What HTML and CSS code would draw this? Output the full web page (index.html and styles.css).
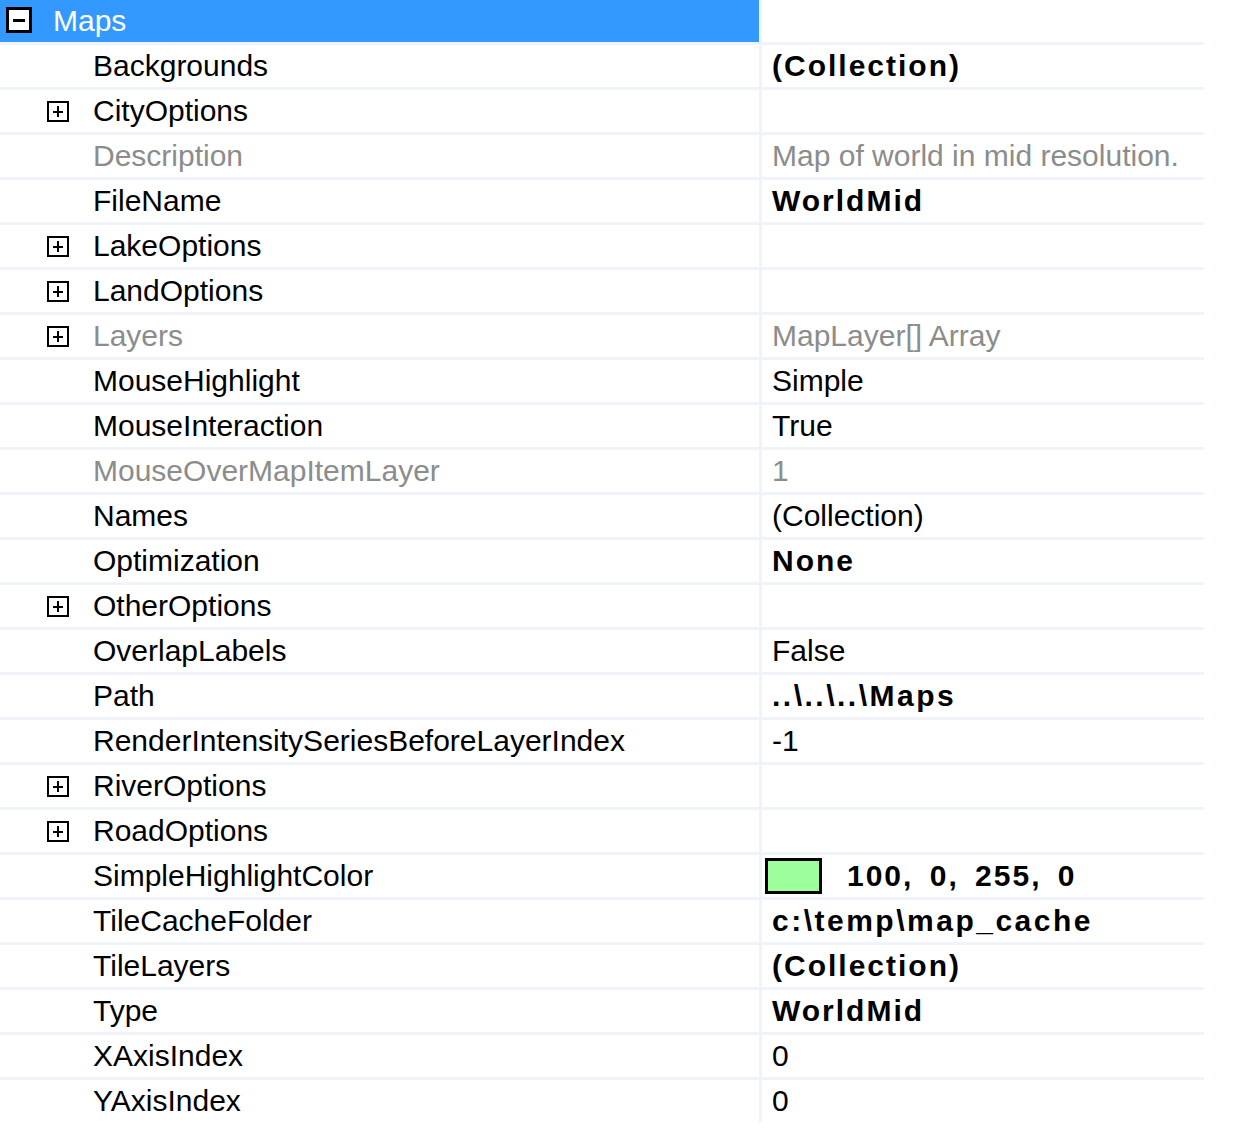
FILE: index.html
```html
<!DOCTYPE html>
<html>
<head>
<meta charset="utf-8">
<link rel="stylesheet" href="styles.css">
</head>
<body>
<div class="grid">
  <div class="row cat">
    <div class="name"><span class="box minus"></span><span class="label">Maps</span></div>
    <div class="value"></div>
  </div>
  <div class="row"><div class="name"><span class="label">Backgrounds</span></div><div class="value bold">(Collection)</div></div>
  <div class="row"><div class="name"><span class="box plus"></span><span class="label">CityOptions</span></div><div class="value"></div></div>
  <div class="row ro"><div class="name"><span class="label">Description</span></div><div class="value">Map of world in mid resolution.</div></div>
  <div class="row"><div class="name"><span class="label">FileName</span></div><div class="value bold">WorldMid</div></div>
  <div class="row"><div class="name"><span class="box plus"></span><span class="label">LakeOptions</span></div><div class="value"></div></div>
  <div class="row"><div class="name"><span class="box plus"></span><span class="label">LandOptions</span></div><div class="value"></div></div>
  <div class="row ro"><div class="name"><span class="box plus"></span><span class="label">Layers</span></div><div class="value">MapLayer[] Array</div></div>
  <div class="row"><div class="name"><span class="label">MouseHighlight</span></div><div class="value">Simple</div></div>
  <div class="row"><div class="name"><span class="label">MouseInteraction</span></div><div class="value">True</div></div>
  <div class="row ro"><div class="name"><span class="label">MouseOverMapItemLayer</span></div><div class="value">1</div></div>
  <div class="row"><div class="name"><span class="label">Names</span></div><div class="value">(Collection)</div></div>
  <div class="row"><div class="name"><span class="label">Optimization</span></div><div class="value bold">None</div></div>
  <div class="row"><div class="name"><span class="box plus"></span><span class="label">OtherOptions</span></div><div class="value"></div></div>
  <div class="row"><div class="name"><span class="label">OverlapLabels</span></div><div class="value">False</div></div>
  <div class="row"><div class="name"><span class="label">Path</span></div><div class="value bold path">..\..\..\Maps</div></div>
  <div class="row"><div class="name"><span class="label">RenderIntensitySeriesBeforeLayerIndex</span></div><div class="value">-1</div></div>
  <div class="row"><div class="name"><span class="box plus"></span><span class="label">RiverOptions</span></div><div class="value"></div></div>
  <div class="row"><div class="name"><span class="box plus"></span><span class="label">RoadOptions</span></div><div class="value"></div></div>
  <div class="row"><div class="name"><span class="label">SimpleHighlightColor</span></div><div class="value color bold"><span class="swatch"></span><span class="rgb">100, 0, 255, 0</span></div></div>
  <div class="row"><div class="name"><span class="label">TileCacheFolder</span></div><div class="value bold path">c:\temp\map_cache</div></div>
  <div class="row"><div class="name"><span class="label">TileLayers</span></div><div class="value bold">(Collection)</div></div>
  <div class="row"><div class="name"><span class="label">Type</span></div><div class="value bold">WorldMid</div></div>
  <div class="row"><div class="name"><span class="label">XAxisIndex</span></div><div class="value">0</div></div>
  <div class="row last"><div class="name"><span class="label">YAxisIndex</span></div><div class="value">0</div></div>
</div>
</body>
</html>
```
FILE: styles.css
```css
html, body {
  margin: 0;
  padding: 0;
  background: #ffffff;
}

.grid {
  width: 1204px;
  font-family: "Liberation Sans", Arial, sans-serif;
  font-size: 30px;
  color: #000000;
}

.row {
  display: flex;
  height: 42px;
  border-bottom: 3px solid #f0f4fa;
}

.row.last {
  border-bottom: none;
}

.name {
  width: 759px;
  flex: none;
  display: flex;
  align-items: center;
  position: relative;
  border-right: 3px solid #f0f4fa;
  line-height: 42px;
  white-space: nowrap;
}

.name .label {
  margin-left: 93px;
}

.cat .name {
  background: #3399ff;
  color: #ffffff;
}

.cat .name .label {
  margin-left: 53px;
}

.value {
  flex: 1;
  display: flex;
  align-items: center;
  padding-left: 10px;
  line-height: 42px;
  white-space: nowrap;
}

.ro .name, .ro .value {
  color: #8c8c8c;
}

.bold {
  font-weight: bold;
  letter-spacing: 2px;
}

.bold.path {
  letter-spacing: 2.5px;
  word-spacing: 2px;
}

.box {
  position: absolute;
  box-sizing: border-box;
  background: #ffffff;
  border: 2px solid #000000;
}

.box.minus {
  left: 6px;
  top: 7px;
  width: 26px;
  height: 26px;
  border-width: 3px;
}

.box.minus::before {
  content: "";
  position: absolute;
  left: 4px;
  right: 4px;
  top: 9px;
  height: 3px;
  background: #000;
}

.box.plus {
  left: 47px;
  top: 11px;
  width: 22px;
  height: 21px;
}

.box.plus::before {
  content: "";
  position: absolute;
  left: 4px;
  right: 4px;
  top: 7.5px;
  height: 2px;
  background: #000;
}

.box.plus::after {
  content: "";
  position: absolute;
  top: 3px;
  bottom: 3px;
  left: 8px;
  width: 2px;
  background: #000;
}

.value.color {
  padding-left: 3px;
}

.swatch {
  box-sizing: border-box;
  width: 57px;
  height: 36px;
  background: #9cff9c;
  border: 3px solid #000000;
  margin-right: 25px;
}

.rgb {
  word-spacing: 6px;
}
```
